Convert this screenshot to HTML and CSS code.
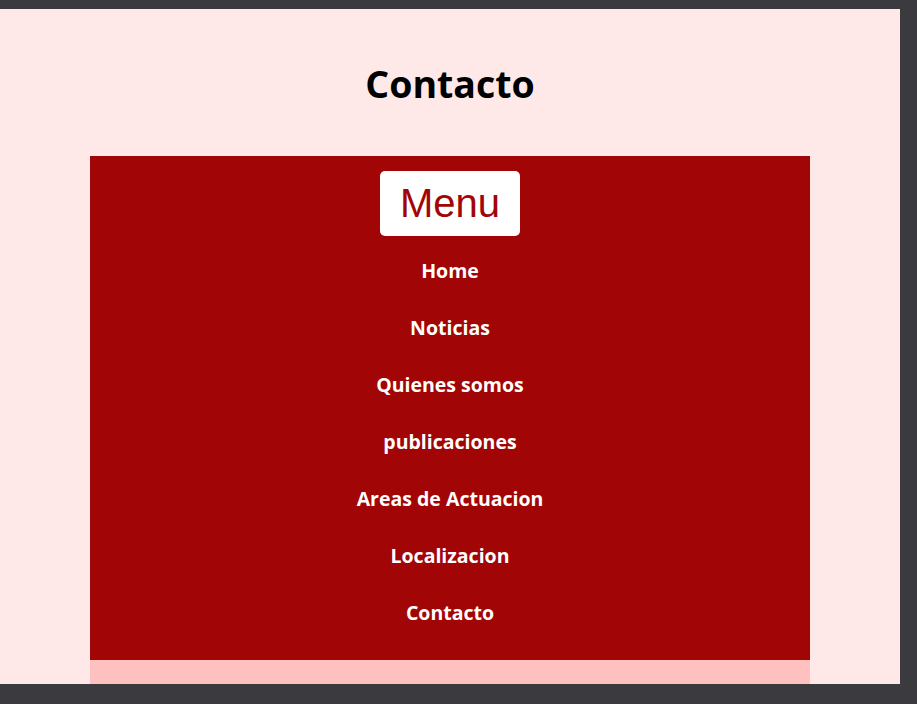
FILE: index.html
```html
<!DOCTYPE html>
<html lang="es">
<head>
<meta charset="utf-8">
<title>Contacto</title>
<link rel="stylesheet" href="styles.css">
</head>
<body>
<div class="viewport">
  <header class="header">
    <h1 class="title">Contacto</h1>
  </header>
  <nav class="nav">
    <button class="menu-btn" type="button">Menu</button>
    <ul class="nav-list">
      <li><a class="nav-link" href="#">Home</a></li>
      <li><a class="nav-link" href="#">Noticias</a></li>
      <li><a class="nav-link" href="#">Quienes somos</a></li>
      <li><a class="nav-link" href="#">publicaciones</a></li>
      <li><a class="nav-link" href="#">Areas de Actuacion</a></li>
      <li><a class="nav-link" href="#">Localizacion</a></li>
      <li><a class="nav-link" href="#">Contacto</a></li>
    </ul>
  </nav>
  <section class="content"></section>
</div>
</body>
</html>
```
FILE: styles.css
```css
html, body {
  margin: 0;
  padding: 0;
}
body {
  background: #3b3b3f;
  height: 704px;
  overflow: hidden;
}
.viewport {
  margin-top: 9px;
  width: 900px;
  height: 675px;
  overflow: hidden;
  background: #ffe8e8;
  font-family: "Open Sans", "Noto Sans", sans-serif;
}
.header {
  height: 147px;
  display: flex;
  align-items: center;
  justify-content: center;
}
.title {
  margin: 0;
  font-size: 37.5px;
  font-weight: 700;
  color: #000;
  line-height: 1;
  padding-top: 3px;
}
.nav {
  width: 720px;
  margin: 0 auto;
  background: #a10505;
  display: flex;
  flex-direction: column;
  align-items: center;
  padding-top: 15px;
}
.menu-btn {
  width: 140px;
  height: 65px;
  border: none;
  border-radius: 5px;
  background: #fff;
  color: #a10505;
  font-family: "Liberation Sans", Arial, sans-serif;
  font-size: 40px;
  padding: 0;
  margin-bottom: 6px;
}
.nav-list {
  list-style: none;
  margin: 0;
  padding: 0 0 19px;
  width: 100%;
}
.nav-link {
  display: block;
  text-align: center;
  color: #fff;
  text-decoration: none;
  font-weight: 700;
  font-size: 19.5px;
  line-height: 21px;
  padding: 18px 0;
}
.content {
  width: 720px;
  margin: 0 auto;
  height: 60px;
  background: #ffc0c0;
}
```
